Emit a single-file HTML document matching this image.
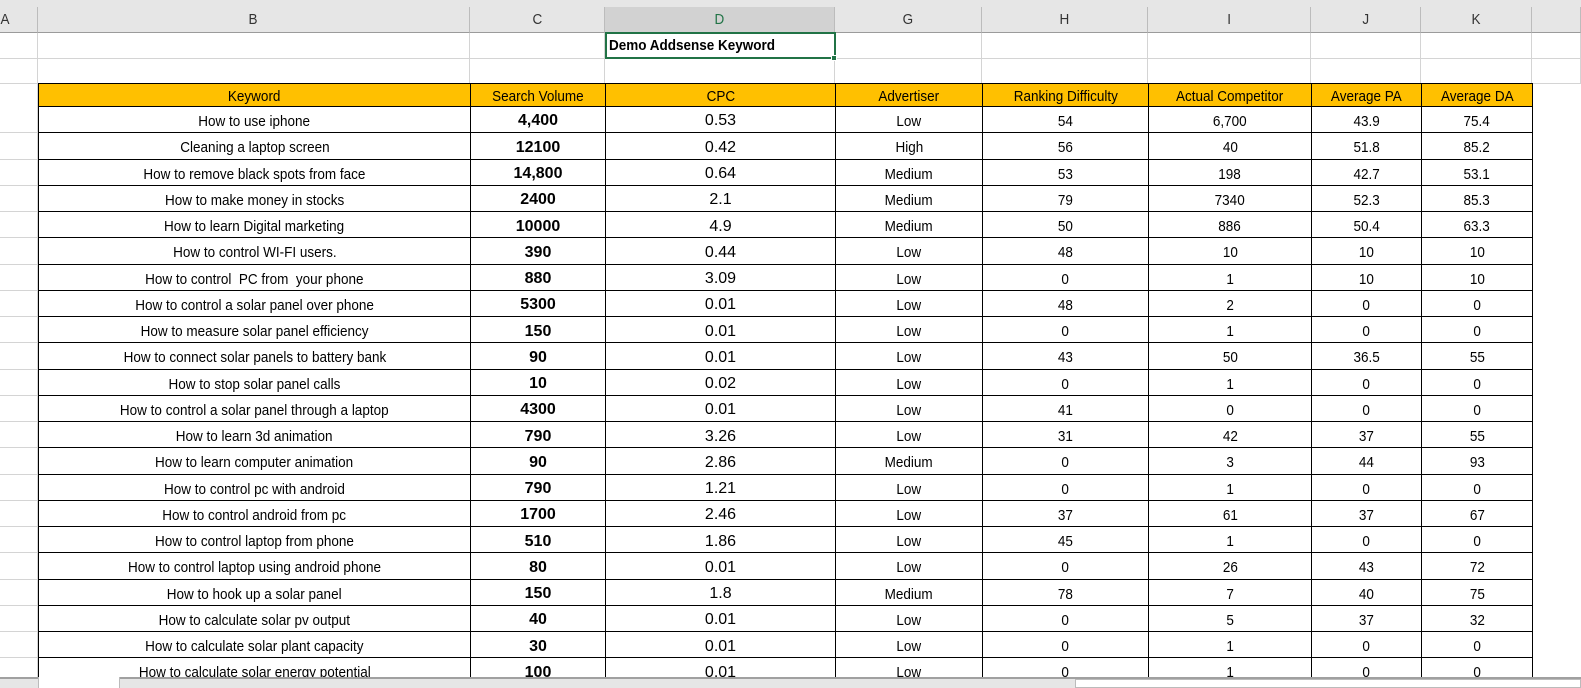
<!DOCTYPE html>
<html><head><meta charset="utf-8">
<style>
body{margin:0;width:1581px;height:688px;overflow:hidden;background:#fff;font-family:"Liberation Sans",Arial,sans-serif;position:relative}
.a{position:absolute;box-sizing:border-box}
.c{position:absolute;box-sizing:border-box;display:flex;align-items:center;justify-content:center;font-size:14.5px;color:#000;white-space:nowrap;overflow:hidden}
.c span.n{display:inline-block;transform:scaleX(0.9);font-size:15px}
.hd{background:#e6e6e6;color:#333;font-size:14px;border-right:1px solid #bcbcbc;border-bottom:1px solid #9b9b9b}
</style></head><body>
<div id="root"></div>
<script>
var cols=[[0,38,'A'],[38,470,'B'],[470,605,'C'],[605,835,'D'],[835,982,'G'],[982,1148,'H'],[1148,1311,'I'],[1311,1421,'J'],[1421,1532,'K'],[1532,1581,'']];
var h='';
h+='<div class="a" style="left:0;top:0;width:1581px;height:33px;background:#e6e6e6"></div>';
cols.forEach(function(c){var bg=c[2]=='D'?'#d2d2d2':'#e6e6e6';var col=c[2]=='D'?'#217346':'#333';
h+='<div class="c hd" style="left:'+c[0]+'px;top:7px;width:'+(c[1]-c[0])+'px;height:26px;background:'+bg+';color:'+col+';justify-content:'+(c[2]=='A'?'flex-start':'center')+'"><span class="n">'+c[2]+'</span></div>';});
[58,83].forEach(function(y){h+='<div class="a" style="left:0;top:'+y+'px;width:1581px;height:1px;background:#d4d4d4"></div>';});
cols.forEach(function(c){h+='<div class="a" style="left:'+(c[1]-1)+'px;top:33px;width:1px;height:50px;background:#d4d4d4"></div>';});
h+='<div class="a" style="left:37px;top:83px;width:1px;height:600px;background:#d4d4d4"></div>';
h+='<div class="c" style="left:605px;top:32px;width:231px;height:27px;border:2px solid #217346;justify-content:flex-start;padding-left:2px;font-weight:bold;font-size:14px"><span class="n" style="transform-origin:left">Demo Addsense Keyword</span></div>';
h+='<div class="a" style="left:831px;top:55px;width:6px;height:6px;background:#217346;border:1px solid #fff"></div>';
var heads=['Keyword','Search Volume','CPC','Advertiser','Ranking Difficulty','Actual Competitor','Average PA','Average DA'];
var data=[
['How to use iphone','4,400','0.53','Low','54','6,700','43.9','75.4'],
['Cleaning a laptop screen','12100','0.42','High','56','40','51.8','85.2'],
['How to remove black spots from face','14,800','0.64','Medium','53','198','42.7','53.1'],
['How to make money in stocks','2400','2.1','Medium','79','7340','52.3','85.3'],
['How to learn Digital marketing','10000','4.9','Medium','50','886','50.4','63.3'],
['How to control WI-FI users.','390','0.44','Low','48','10','10','10'],
['How to control&nbsp; PC from&nbsp; your phone','880','3.09','Low','0','1','10','10'],
['How to control a solar panel over phone','5300','0.01','Low','48','2','0','0'],
['How to measure solar panel efficiency','150','0.01','Low','0','1','0','0'],
['How to connect solar panels to battery bank','90','0.01','Low','43','50','36.5','55'],
['How to stop solar panel calls','10','0.02','Low','0','1','0','0'],
['How to control a solar panel through a laptop','4300','0.01','Low','41','0','0','0'],
['How to learn 3d animation','790','3.26','Low','31','42','37','55'],
['How to learn computer animation','90','2.86','Medium','0','3','44','93'],
['How to control pc with android','790','1.21','Low','0','1','0','0'],
['How to control android from pc','1700','2.46','Low','37','61','37','67'],
['How to control laptop from phone','510','1.86','Low','45','1','0','0'],
['How to control laptop using android phone','80','0.01','Low','0','26','43','72'],
['How to hook up a solar panel','150','1.8','Medium','78','7','40','75'],
['How to calculate solar pv output','40','0.01','Low','0','5','37','32'],
['How to calculate solar plant capacity','30','0.01','Low','0','1','0','0'],
['How to calculate solar energy potential','100','0.01','Low','0','1','0','0']];
var tc=cols.slice(1,9);
tc.forEach(function(c,i){h+='<div class="c" style="left:'+c[0]+'px;top:83px;width:'+(c[1]-c[0]+1)+'px;height:24px;background:#ffc000;border:1px solid #000;padding-top:3px"><span class="n">'+heads[i]+'</span></div>';});
var y=106,rh=26.25;
data.forEach(function(r){
 tc.forEach(function(c,i){var st='',txt='<span class="n">'+r[i]+'</span>';
  if(i==1){st='font-weight:bold;font-size:16px;';txt=r[i];}
  if(i==2){st='font-size:16px;';txt=r[i];}
  h+='<div class="c" style="left:'+c[0]+'px;top:'+y+'px;width:'+(c[1]-c[0]+1)+'px;height:'+(rh+1)+'px;border:1px solid #000;border-top-width:'+(y==106?0:1)+'px;padding-top:4px;'+st+'">'+txt+'</div>';});
 h+='<div class="a" style="left:0;top:'+Math.round(y+rh)+'px;width:37px;height:1px;background:#d4d4d4"></div>';
 y+=rh;});
h+='<div class="a" style="left:0;top:677px;width:1581px;height:11px;background:#e6e6e6;border-top:2px solid #a0a0a0"></div>';
h+='<div class="a" style="left:38px;top:677px;width:82px;height:11px;background:#fff;border-left:1px solid #bbb;border-right:1px solid #bbb"></div>';
h+='<div class="a" style="left:1075px;top:679px;width:506px;height:9px;background:#fff;border:1px solid #bbb"></div>';
document.getElementById('root').innerHTML=h;
</script>
</body></html>
